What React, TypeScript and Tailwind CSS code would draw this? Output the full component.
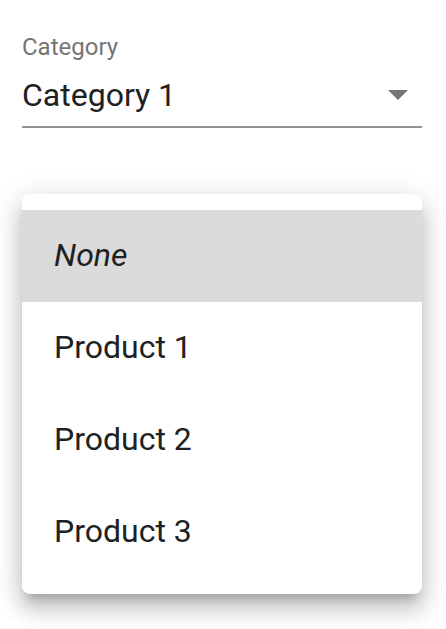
import { useState } from "react";

const options = ["None", "Product 1", "Product 2", "Product 3"];

export default function App() {
  const [selected, setSelected] = useState(0);

  return (
    <div className="min-h-screen bg-white px-[22px] pt-[35px] font-['Roboto',sans-serif] text-[#212121]">
      {/* Select field */}
      <div className="w-[400px]">
        <label className="block text-[24px] leading-[24px] text-[#757575]">Category</label>
        <div className="mt-[17px] flex items-center justify-between border-b-2 border-[#949494] pb-[12px]">
          <span className="text-[32px] leading-[38px]">Category 1</span>
          <svg className="mr-[14px] h-[10px] w-[20px]" viewBox="0 0 20 10" fill="#757575">
            <path d="M0 0h20L10 10z" />
          </svg>
        </div>
      </div>

      {/* Menu */}
      <ul className="mt-[66px] w-[400px] rounded-[8px] bg-white py-[16px] shadow-[0_10px_10px_-6px_rgba(0,0,0,0.2),0_16px_20px_2px_rgba(0,0,0,0.14),0_6px_28px_4px_rgba(0,0,0,0.12)]">
        {options.map((o, i) => (
          <li
            key={o}
            onClick={() => setSelected(i)}
            className={`flex h-[92px] cursor-pointer items-center px-[32px] pb-[2px] text-[32px] leading-[48px] ${
              i === selected ? "bg-[#dbdbdb]" : "bg-white"
            } ${i === 0 ? "italic" : ""}`}
          >
            {o}
          </li>
        ))}
      </ul>
    </div>
  );
}
